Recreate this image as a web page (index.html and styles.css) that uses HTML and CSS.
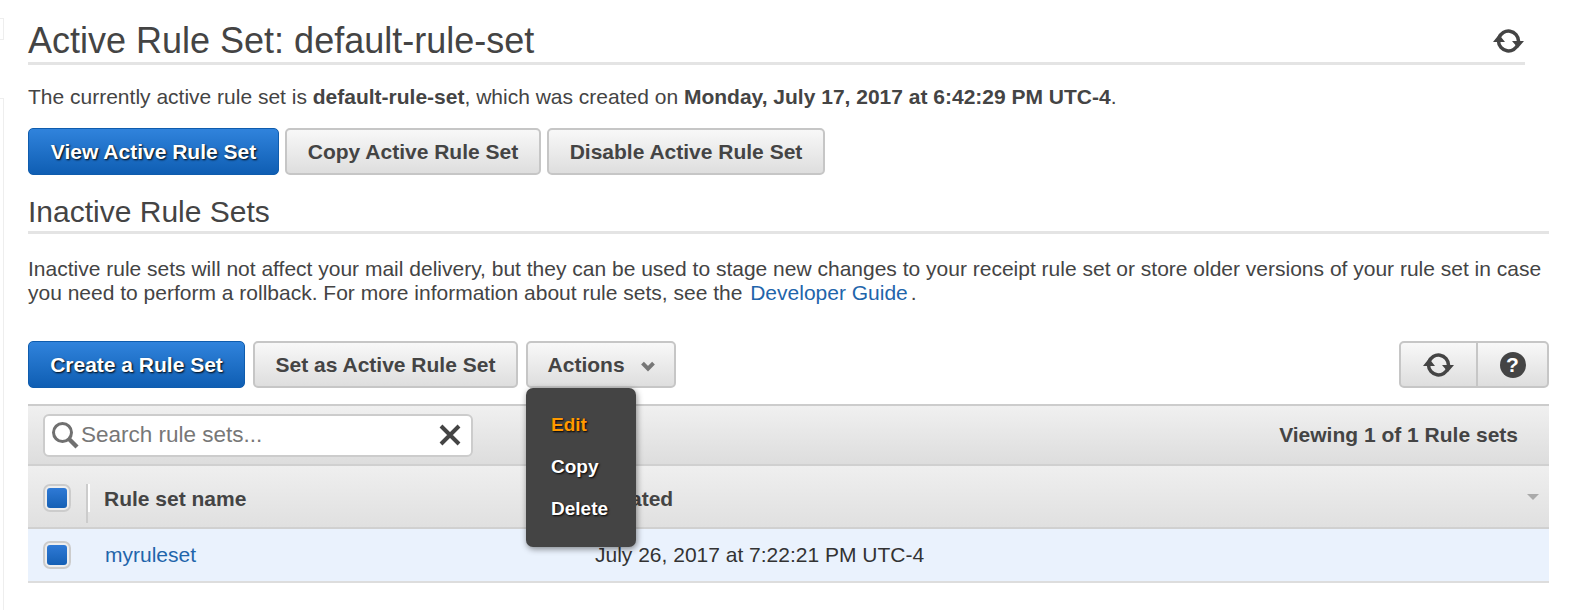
FILE: index.html
```html
<!doctype html>
<html>
	<head>
		<meta charset="utf-8">
		<title>Rule Sets</title>
		<link rel="stylesheet" href="styles.css">
	</head>
	<body>
		<div class="nav-edge"><span class="nav-tick"></span><span class="nav-line"></span></div>
		<div class="page">
			<div class="title-row">
				<h1>Active Rule Set: default-rule-set</h1>
				<svg class="icon-refresh" viewBox="0 0 32 32"><path d="M6 13A10 10 0 0 1 25.500 16M5.500 16A10 10 0 0 0 25 19" fill="none" stroke="#444" stroke-width="3.500"/><path d="M19 16L31 16L25 23ZM0 17L12 17L6 9.500Z" fill="#444"/></svg>
			</div>
			<p class="intro">The currently active rule set is <b>default-rule-set</b>, which was created on <b>Monday, July 17, 2017 at 6:42:29 PM UTC-4</b>.</p>
			<div class="btn-row active-btns">
				<button class="btn primary view">View Active Rule Set</button>
				<button class="btn copy">Copy Active Rule Set</button>
				<button class="btn disable">Disable Active Rule Set</button>
			</div>
			<h2>Inactive Rule Sets</h2>
			<p class="desc">Inactive rule sets will not affect your mail delivery, but they can be used to stage new changes to your receipt rule set or store older versions of your rule set in case you need to perform a rollback. For more information about rule sets, see the <a href="#" class="guide">Developer Guide</a>.</p>
			<div class="btn-row toolbar-btns">
				<button class="btn primary create">Create a Rule Set</button>
				<button class="btn setactive">Set as Active Rule Set</button>
				<div class="actions-wrap">
					<button class="btn actions">Actions <svg class="chev" viewBox="0 0 14 10"><path d="M2 2L7 7L12 2" fill="none" stroke="#777" stroke-width="3.500"/></svg></button>
					<div class="menu">
						<div class="menu-item on">Edit</div>
						<div class="menu-item">Copy</div>
						<div class="menu-item">Delete</div>
					</div>
				</div>
				<div class="btn-group">
					<div class="group-cell refresh-cell"><svg class="icon-refresh" viewBox="0 0 32 32"><path d="M6 13A10 10 0 0 1 25.500 16M5.500 16A10 10 0 0 0 25 19" fill="none" stroke="#444" stroke-width="3.500"/><path d="M19 16L31 16L25 23ZM0 17L12 17L6 9.500Z" fill="#444"/></svg></div>
					<div class="group-cell help-cell"><span class="help">?</span></div>
				</div>
			</div>
			<div class="table">
				<div class="filter-bar">
					<div class="search">
						<svg class="icon-search" viewBox="0 0 28 28"><circle cx="11.500" cy="11.500" r="9" fill="none" stroke="#707070" stroke-width="3"/><path d="M18 18L26 26" stroke="#707070" stroke-width="4.500"/></svg>
						<span class="search-text">Search rule sets...</span>
						<svg class="icon-x" viewBox="0 0 22 22"><path d="M2 2L20 20M20 2L2 20" stroke="#444" stroke-width="4"/></svg>
					</div>
					<div class="viewing">Viewing 1 of 1 Rule sets</div>
				</div>
				<div class="head-row">
					<div class="cell-check"><span class="check"></span></div>
					<div class="head-name">Rule set name</div>
					<div class="head-created">Created</div>
					<span class="sort"></span>
				</div>
				<div class="body-row">
					<div class="cell-check"><span class="check"></span></div>
					<div class="cell-name"><a href="#">myruleset</a></div>
					<div class="cell-created">July 26, 2017 at 7:22:21 PM UTC-4</div>
				</div>
			</div>
		</div>
	</body>
</html>
```

FILE: styles.css
```css
html, body {
    margin: 0;
    padding: 0;
    height: 100%;
    overflow: hidden;
    background: #fff;
    color: #444;
    font-family: "Liberation Sans", Arial, sans-serif;
}
.nav-edge {
    position: absolute;
    left: 0;
    top: 0;
    width: 4px;
    height: 100%;
}
.nav-tick {
    position: absolute;
    top: 18px;
    left: 0;
    width: 4px;
    height: 22px;
    border: 1px solid #eee;
    border-left: 0;
    box-sizing: border-box;
}
.nav-line {
    position: absolute;
    top: 98px;
    left: 0;
    bottom: 0;
    width: 4px;
    border: 1px solid #eee;
    border-width: 1px 1px 0 0;
    box-sizing: border-box;
}
.page {
    padding: 19px 37px 0 28px;
}
.title-row {
    display: flex;
    justify-content: space-between;
    align-items: center;
    width: 1497px;
    height: 43px;
    border-bottom: 3px solid #e4e4e4;
}
h1 {
    margin: 0;
    font-size: 36px;
    font-weight: normal;
    line-height: 40px;
}
.icon-refresh {
    width: 32px;
    height: 32px;
}
.intro {
    margin: 20px 0 0;
    font-size: 21px;
    line-height: 24px;
}
.btn-row {
    display: flex;
}
.active-btns {
    margin-top: 19px;
    gap: 6px;
}
.btn {
    height: 47px;
    margin: 0;
    padding: 0;
    box-sizing: border-box;
    border: 2px solid #c6c6c6;
    border-radius: 5px;
    background: linear-gradient(#f8f8f8, #dedede);
    color: #444;
    font-family: inherit;
    font-size: 21px;
    font-weight: bold;
}
.btn.primary {
    border: 1px solid #0f5cad;
    background: linear-gradient(#3083dc, #0f5eb3);
    color: #fff;
    text-shadow: 1px 1px 2px #000;
}
.view { width: 251px; }
.copy { width: 256px; }
.disable { width: 278px; }
h2 {
    margin: 18px 0 0;
    border-bottom: 3px solid #e4e4e4;
    font-size: 30px;
    font-weight: normal;
    line-height: 38px;
}
.desc {
    margin: 23px 0 0;
    font-size: 21px;
    line-height: 24px;
}
.guide, .cell-name a {
    color: #1f65ab;
    text-decoration: none;
}
.guide {
    margin-left: 2px;
    margin-right: 3px;
}
.toolbar-btns {
    margin-top: 36px;
    align-items: flex-start;
}
.create { width: 217px; margin-right: 8px; }
.setactive { width: 265px; margin-right: 8px; }
.actions-wrap {
    position: relative;
    width: 150px;
}
.actions {
    width: 150px;
    padding-left: 2px;
}
.chev {
    width: 16px;
    height: 11px;
    margin-left: 10px;
}
.menu {
    position: absolute;
    top: 47px;
    left: 0;
    width: 110px;
    height: 159px;
    padding-top: 16px;
    box-sizing: border-box;
    background: #444;
    border-radius: 7px;
    box-shadow: 1px 2px 6px rgba(0, 0, 0, .45);
    z-index: 5;
}
.menu-item {
    height: 42px;
    line-height: 42px;
    padding-left: 25px;
    color: #fff;
    font-size: 19px;
    font-weight: bold;
    text-shadow: 1px 1px 2px #000;
}
.menu-item.on {
    color: #f90;
}
.btn-group {
    display: flex;
    margin-left: auto;
    width: 150px;
    height: 47px;
    box-sizing: border-box;
    border: 2px solid #c6c6c6;
    border-radius: 5px;
    background: linear-gradient(#f8f8f8, #dedede);
}
.group-cell {
    display: flex;
    align-items: center;
    justify-content: center;
}
.refresh-cell {
    width: 75px;
    border-right: 2px solid #c6c6c6;
}
.help-cell {
    flex: 1;
}
.help {
    width: 26px;
    height: 26px;
    border-radius: 50%;
    background: #444;
    color: #fff;
    font-size: 21px;
    font-weight: bold;
    line-height: 26px;
    text-align: center;
}
.table {
    margin-top: 16px;
}
.filter-bar {
    display: flex;
    align-items: center;
    justify-content: space-between;
    height: 62px;
    box-sizing: border-box;
    padding: 0 31px 0 15px;
    border-top: 2px solid #ccc;
    border-bottom: 2px solid #d0d0d0;
    background: linear-gradient(#f0f0f0, #ddd);
}
.search {
    display: flex;
    align-items: center;
    width: 430px;
    height: 43px;
    box-sizing: border-box;
    padding: 0 10px 0 6px;
    border: 2px solid #ccc;
    border-radius: 6px;
    background: #fff;
    font-size: 22.500px;
    color: #777;
}
.icon-search {
    width: 28px;
    height: 28px;
    margin-right: 2px;
}
.search-text {
    flex: 1;
}
.icon-x {
    width: 22px;
    height: 22px;
}
.viewing {
    font-size: 21px;
    font-weight: bold;
}
.head-row {
    position: relative;
    display: flex;
    align-items: flex-start;
    height: 63px;
    box-sizing: border-box;
    border-bottom: 2px solid #d0d0d0;
    background: linear-gradient(#efefef, #e0e0e0);
    font-size: 21px;
    font-weight: bold;
}
.head-row .cell-check {
    margin-top: 18px;
}
.cell-check {
    width: 58px;
    display: flex;
    padding-left: 15px;
    box-sizing: border-box;
}
.check {
    display: block;
    width: 28px;
    height: 28px;
    box-sizing: border-box;
    padding: 2px;
    border: 2px solid #ccc;
    border-radius: 7px;
    background: linear-gradient(#2f7ad6, #1560b5) content-box, #eee;
}
.head-name {
    width: 509px;
    height: 39px;
    margin-top: 18px;
    line-height: 29px;
    padding-left: 16px;
    border-left: 2px solid #ccc;
    background: linear-gradient(#fff, #fff) no-repeat 0 0 / 2px 28px;
    box-sizing: border-box;
}
.head-created {
    margin-top: 18px;
    line-height: 29px;
}
.sort {
    position: absolute;
    right: 10px;
    top: 28px;
    border: 6px solid transparent;
    border-top: 6px solid #aaa;
    border-bottom: 0;
}
.body-row {
    display: flex;
    align-items: center;
    height: 54px;
    box-sizing: border-box;
    border-bottom: 2px solid #ddd;
    background: #eaf2fd;
    font-size: 21px;
    color: #333;
}
.cell-name {
    width: 509px;
    padding-left: 19px;
    box-sizing: border-box;
}
```
